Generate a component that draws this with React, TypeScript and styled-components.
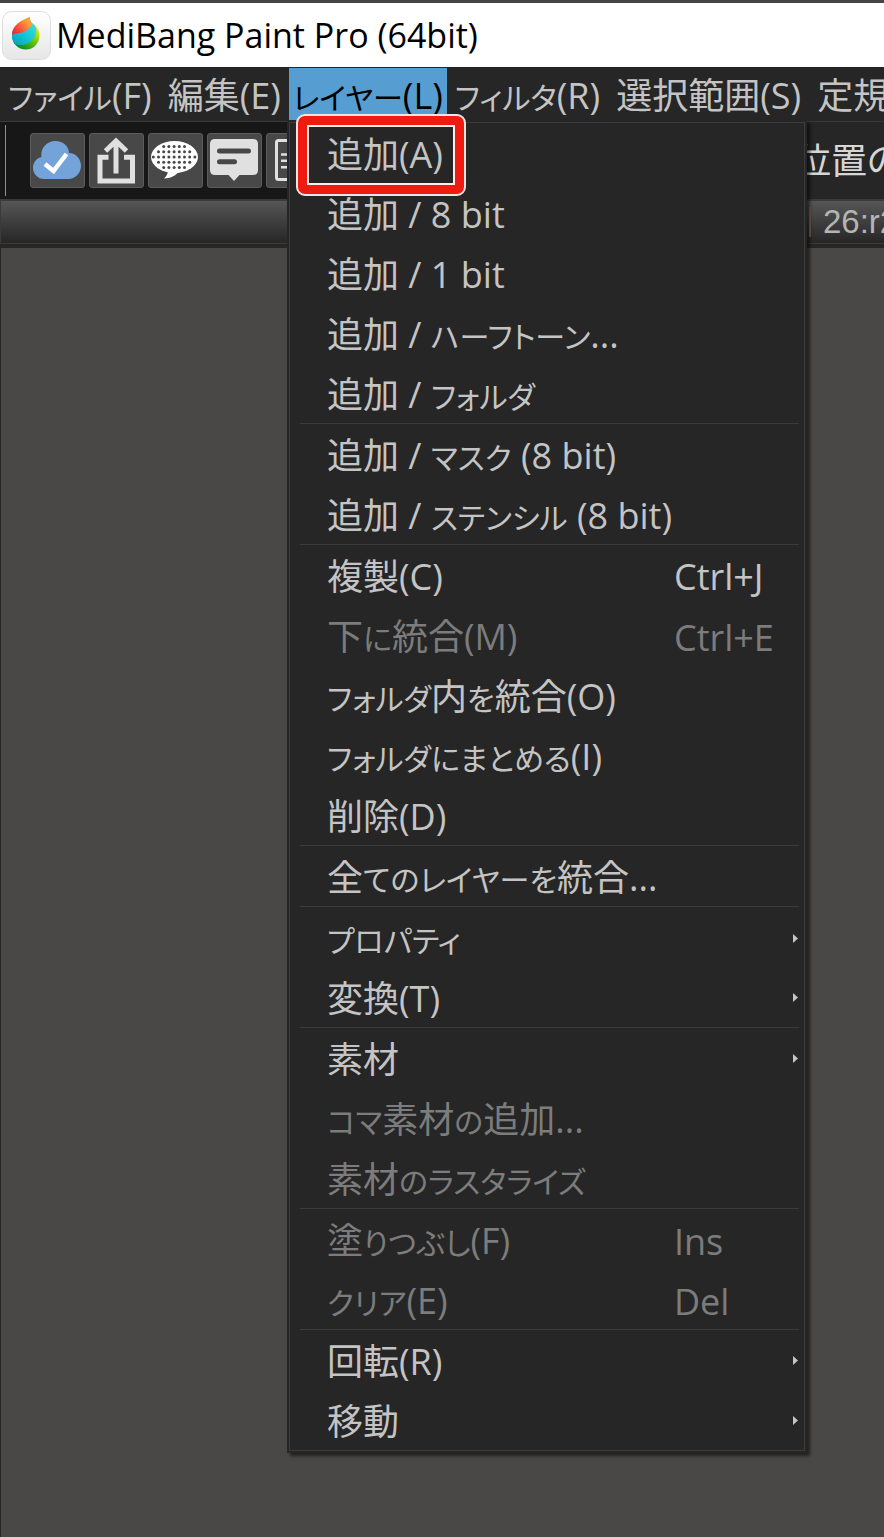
import React from 'react';
import styled, { createGlobalStyle } from 'styled-components';

const GlobalStyle = createGlobalStyle`
  *, *::before, *::after { box-sizing: border-box; }
  body { margin: 0; background: #4a4846; }
  button { font: inherit; color: inherit; background: none; border: 0; padding: 0; margin: 0; text-align: left; }
`;

const Window = styled.div`
  display: flex;
  flex-direction: column;
  min-height: 100vh;
  overflow: hidden;
  border-top: 3px solid #464545;
  background: #4a4846;
  font-family: 'Open Sans', 'Noto Sans CJK JP', sans-serif;
  font-feature-settings: 'palt';
  font-size: 36px;
  line-height: 52px;
  color: #c4c4c4;
  white-space: nowrap;
`;

const TitleBar = styled.header`
  display: flex;
  align-items: center;
  gap: 5px;
  height: 64px;
  padding: 0 2px;
  background: #fff;
  color: #000;
`;

const Title = styled.h1`
  margin: 0;
  font-size: 34px;
  font-weight: 400;
`;

const MenuBar = styled.nav`
  position: relative;
  z-index: 1;
  display: flex;
  height: 55px;
  padding-top: 1px;
  background: #262626;
  border-bottom: 1px solid #3a3a3a;
`;

const MenuSlot = styled.div`
  position: relative;
  flex: none;
`;

const MenuTitle = styled.button<{ $open?: boolean }>`
  height: 52px;
  padding: ${(p) => (p.$open ? '4px 4px 0' : '4px 8px 0')};
  line-height: 48px;
  background: ${(p) => (p.$open ? '#569dd1' : 'transparent')};
  color: ${(p) => (p.$open ? '#000' : '#c4c4c4')};
`;

const Menu = styled.div`
  position: absolute;
  top: 52px;
  left: -2px;
  width: 520px;
  padding: 2px;
  background: #262626;
  box-shadow: 3px 3px 3px rgba(0, 0, 0, 0.55);
`;

const MenuFrame = styled.div`
  border: 1px solid #3b3b3b;
`;

const MenuItem = styled.button`
  position: relative;
  display: grid;
  grid-template-columns: 347px 1fr 5px;
  align-items: center;
  width: 100%;
  height: 60px;
  padding: 0 6px 0 37px;
  line-height: 56px;
  color: #c4c4c4;

  &:disabled { color: #7c7c7c; }
`;

const Label = styled.span`
  padding-top: 4px;
`;

const Shortcut = styled(Label)`
  grid-column: 2;
`;

const Kana = styled.span`
  font-size: 30px;
`;

const Arrow = styled.svg`
  grid-column: 3;
  display: block;
`;

const Separator = styled.hr`
  height: 1px;
  margin: 0 5px 0 10px;
  border: 0;
  background: #3b3b3b;
`;

const Highlight = styled.span`
  position: absolute;
  top: -9px;
  left: 6px;
  width: 170px;
  height: 82px;
  border: 2px solid #f4e4e2;
  border-radius: 9px;
  background: #f01b10;
  padding: 9px;
  clip-path: path(evenodd, 'M0 0H170V82H0Z M13 13H157V69H13Z');

  &::after {
    content: '';
    display: block;
    height: 100%;
    border: 2px solid #fbeceb;
  }
`;

const ToolBar = styled.div`
  display: flex;
  height: 77px;
  background: #171717;
`;

const Grip = styled.div`
  flex: none;
  width: 1px;
  margin: 3px 24px 3px 5px;
  background: #569dd1;
`;

const Tools = styled.div`
  display: flex;
  flex: none;
  align-items: center;
  gap: 4px;
`;

const ToolButton = styled.button`
  width: 55px;
  height: 55px;
  background: #484848;
  border: 1px solid #5c5c5c;
  border-radius: 3px;

  svg { display: block; margin: -1px; }
`;

const ToolLabel = styled.div`
  flex: 1;
  display: flex;
  align-items: center;
  margin-left: 474px;
  background: #262626;
  color: #d6d6d6;
`;

const BrushBar = styled.div`
  display: flex;
  justify-content: flex-start;
  align-items: center;
  height: 45px;
  padding-left: 808px;
  border: solid #3b3b3b;
  border-width: 2px 0 1px 1px;
  background: linear-gradient(#565656, #262626);
`;

const BrushName = styled.span`
  flex: none;
  padding-left: 12px;
  border-left: 2px solid #6d5c52;
  font-family: 'Liberation Sans', sans-serif;
  font-size: 33px;
  line-height: 30px;
  color: #b4b4b4;
`;

const Canvas = styled.main`
  flex: 1;
  border: solid #262626;
  border-width: 4px 0 0 1px;
  background: #4a4846;
`;

const Logo = () => (
  <svg width="49" height="49" viewBox="0 0 49 49" aria-hidden="true">
    <defs>
      <linearGradient id="tile" x2="0" y2="1">
        <stop offset="0" stopColor="#fff" />
        <stop offset="1" stopColor="#e6e6e6" />
      </linearGradient>
      <linearGradient id="tip" x1="0" y1="1" x2="1" y2="0.2">
        <stop offset="0" stopColor="#f5103c" />
        <stop offset="0.35" stopColor="#fb4038" />
        <stop offset="0.8" stopColor="#ff9f3b" />
      </linearGradient>
      <linearGradient id="mid" x1="0" y1="1" x2="1" y2="0">
        <stop offset="0" stopColor="#0795b8" />
        <stop offset="0.5" stopColor="#13c9d4" />
        <stop offset="1" stopColor="#4fe0dc" />
      </linearGradient>
      <linearGradient id="base" gradientUnits="userSpaceOnUse" x1="37" y1="18" x2="20" y2="38">
        <stop offset="0" stopColor="#f2ee0c" />
        <stop offset="0.55" stopColor="#5cc00c" />
        <stop offset="1" stopColor="#098c2c" />
      </linearGradient>
      <clipPath id="drop">
        <path d="M28 6C27.600 9 28.500 11 30.500 12.500C35 15.500 37.500 19.500 37.500 24.500C37.500 32.500 31.500 38.500 24 38.500C16 38.500 10 32.500 10 24.500C10 14 19 9.500 28 6Z" />
      </clipPath>
    </defs>
    <rect x="0.500" y="0.500" width="48" height="48" rx="9" fill="url(#tile)" stroke="#dedede" />
    <g clipPath="url(#drop)">
      <rect x="9" y="5" width="29" height="35" fill="url(#base)" />
      <path d="M8 20L28 9L33 14C37 22 32 30 24 33C19 35 14 34 8 31Z" fill="url(#mid)" />
      <path d="M8 5H31V12C28 17 25 20 20 21.500C16 22.500 12 22 8 25Z" fill="url(#tip)" />
    </g>
  </svg>
);

const Icon = ({ children }: { children: React.ReactNode }) => (
  <svg width="55" height="55" viewBox="0 0 55 55" fill="none" aria-hidden="true">
    {children}
  </svg>
);

const CloudIcon = () => (
  <Icon>
    <path
      d="M14 46C8 46 3 41 3 35C3 29 7 25 11.500 24C10 15 17 8 25.500 8C33 8 39 13 39 20C46 20 51 26 51 33C51 40 45 46 38.500 46Z"
      fill="#73a3d9"
    />
    <path d="M15 31L23.500 38L36.500 21" stroke="#fff" strokeWidth="4.500" />
  </Icon>
);

const ShareIcon = () => (
  <Icon>
    <path d="M19.500 24.300H11V48H43.500V24.300H35" stroke="#e0e0e0" strokeWidth="5" />
    <path d="M27 40.500V9M16.500 18L27 8L37.500 18" stroke="#e0e0e0" strokeWidth="5" />
  </Icon>
);

const dotRows = [
  { y: 13.5, from: 1, to: 5 },
  { y: 18.8, from: 0, to: 6 },
  { y: 24, from: -1, to: 7 },
  { y: 29.2, from: 0, to: 6 },
  { y: 34.4, from: 1, to: 5 },
];

const BalloonIcon = () => (
  <Icon>
    <ellipse cx="26.500" cy="24" rx="23.500" ry="16" fill="#fff" />
    <path d="M20 37C20 41 18.500 43 16 45.500C23 45.500 28 42 32 38Z" fill="#fff" />
    {dotRows.map((row) =>
      Array.from({ length: row.to - row.from + 1 }, (_, i) => (
        <circle key={`${row.y}-${i}`} cx={10.5 + (row.from + i) * 5.2} cy={row.y} r="1.5" fill="#484848" />
      )),
    )}
  </Icon>
);

const CommentIcon = () => (
  <Icon>
    <path
      d="M8 6H46Q51 6 51 11V37Q51 42 46 42H32.500L27 48L21.500 42H8Q3 42 3 37V11Q3 6 8 6Z"
      fill="#e0e0e0"
    />
    <path d="M12.500 18H41.500M12.500 28.700H27.500" stroke="#484848" strokeWidth="5" strokeLinecap="round" />
  </Icon>
);

const PageIcon = () => (
  <Icon>
    <rect x="10.500" y="7.500" width="34" height="39" rx="2" stroke="#e0e0e0" strokeWidth="3" />
    <path d="M15 21.500H40M15 27.800H40M15 34.200H40" stroke="#e0e0e0" strokeWidth="2.500" />
  </Icon>
);

const tools = [
  { label: 'クラウド', icon: <CloudIcon /> },
  { label: '共有', icon: <ShareIcon /> },
  { label: '吹き出し', icon: <BalloonIcon /> },
  { label: 'コメント', icon: <CommentIcon /> },
  { label: 'ページ', icon: <PageIcon /> },
];

type Entry = {
  label: string;
  shortcut?: string;
  disabled?: boolean;
  submenu?: boolean;
  highlighted?: boolean;
};

const groups: Entry[][] = [
  [
    { label: '追加(A)', highlighted: true },
    { label: '追加 / 8 bit' },
    { label: '追加 / 1 bit' },
    { label: '追加 / ハーフトーン...' },
    { label: '追加 / フォルダ' },
  ],
  [{ label: '追加 / マスク (8 bit)' }, { label: '追加 / ステンシル (8 bit)' }],
  [
    { label: '複製(C)', shortcut: 'Ctrl+J' },
    { label: '下に統合(M)', shortcut: 'Ctrl+E', disabled: true },
    { label: 'フォルダ内を統合(O)' },
    { label: 'フォルダにまとめる(I)' },
    { label: '削除(D)' },
  ],
  [{ label: '全てのレイヤーを統合...' }],
  [
    { label: 'プロパティ', submenu: true },
    { label: '変換(T)', submenu: true },
  ],
  [
    { label: '素材', submenu: true },
    { label: 'コマ素材の追加...', disabled: true },
    { label: '素材のラスタライズ', disabled: true },
  ],
  [
    { label: '塗りつぶし(F)', shortcut: 'Ins', disabled: true },
    { label: 'クリア(E)', shortcut: 'Del', disabled: true },
  ],
  [
    { label: '回転(R)', submenu: true },
    { label: '移動', submenu: true },
  ],
];

// Kana are set smaller than the kanji and Latin letters around them.
const Caption = ({ text }: { text: string }) => (
  <>
    {text.split(/([\u3040-\u30ff]+)/).map((run, index) => (index % 2 ? <Kana key={index}>{run}</Kana> : run))}
  </>
);

const LayerMenu = () => (
  <Menu role="menu" aria-label="レイヤー">
    <MenuFrame>
      {groups.map((group, index) => (
        <React.Fragment key={index}>
          {index > 0 && <Separator />}
          {group.map((entry) => (
            <MenuItem key={entry.label} role="menuitem" disabled={entry.disabled}>
              <Label>
                <Caption text={entry.label} />
              </Label>
              {entry.shortcut && <Shortcut>{entry.shortcut}</Shortcut>}
              {entry.submenu && (
                <Arrow width="5" height="9" viewBox="0 0 5 9" aria-hidden="true">
                  <path d="M0 0L5 4.500L0 9Z" fill="#c4c4c4" />
                </Arrow>
              )}
              {entry.highlighted && <Highlight />}
            </MenuItem>
          ))}
        </React.Fragment>
      ))}
    </MenuFrame>
  </Menu>
);

const menuTitles = ['ファイル(F)', '編集(E)', 'レイヤー(L)', 'フィルタ(R)', '選択範囲(S)', '定規'];

export default function App() {
  return (
    <>
      <GlobalStyle />
      <Window>
        <TitleBar>
          <Logo />
          <Title>MediBang Paint Pro (64bit)</Title>
        </TitleBar>
        <MenuBar>
          {menuTitles.map((title) => {
            const open = title.startsWith('レイヤー');
            return (
              <MenuSlot key={title}>
                <MenuTitle $open={open} aria-haspopup="menu" aria-expanded={open}>
                  <Caption text={title} />
                </MenuTitle>
                {open && <LayerMenu />}
              </MenuSlot>
            );
          })}
        </MenuBar>
        <ToolBar>
          <Grip />
          <Tools>
            {tools.map((tool) => (
              <ToolButton key={tool.label} aria-label={tool.label}>
                {tool.icon}
              </ToolButton>
            ))}
          </Tools>
          <ToolLabel>位置の</ToolLabel>
        </ToolBar>
        <BrushBar>
          <BrushName>26:r2</BrushName>
        </BrushBar>
        <Canvas />
      </Window>
    </>
  );
}
